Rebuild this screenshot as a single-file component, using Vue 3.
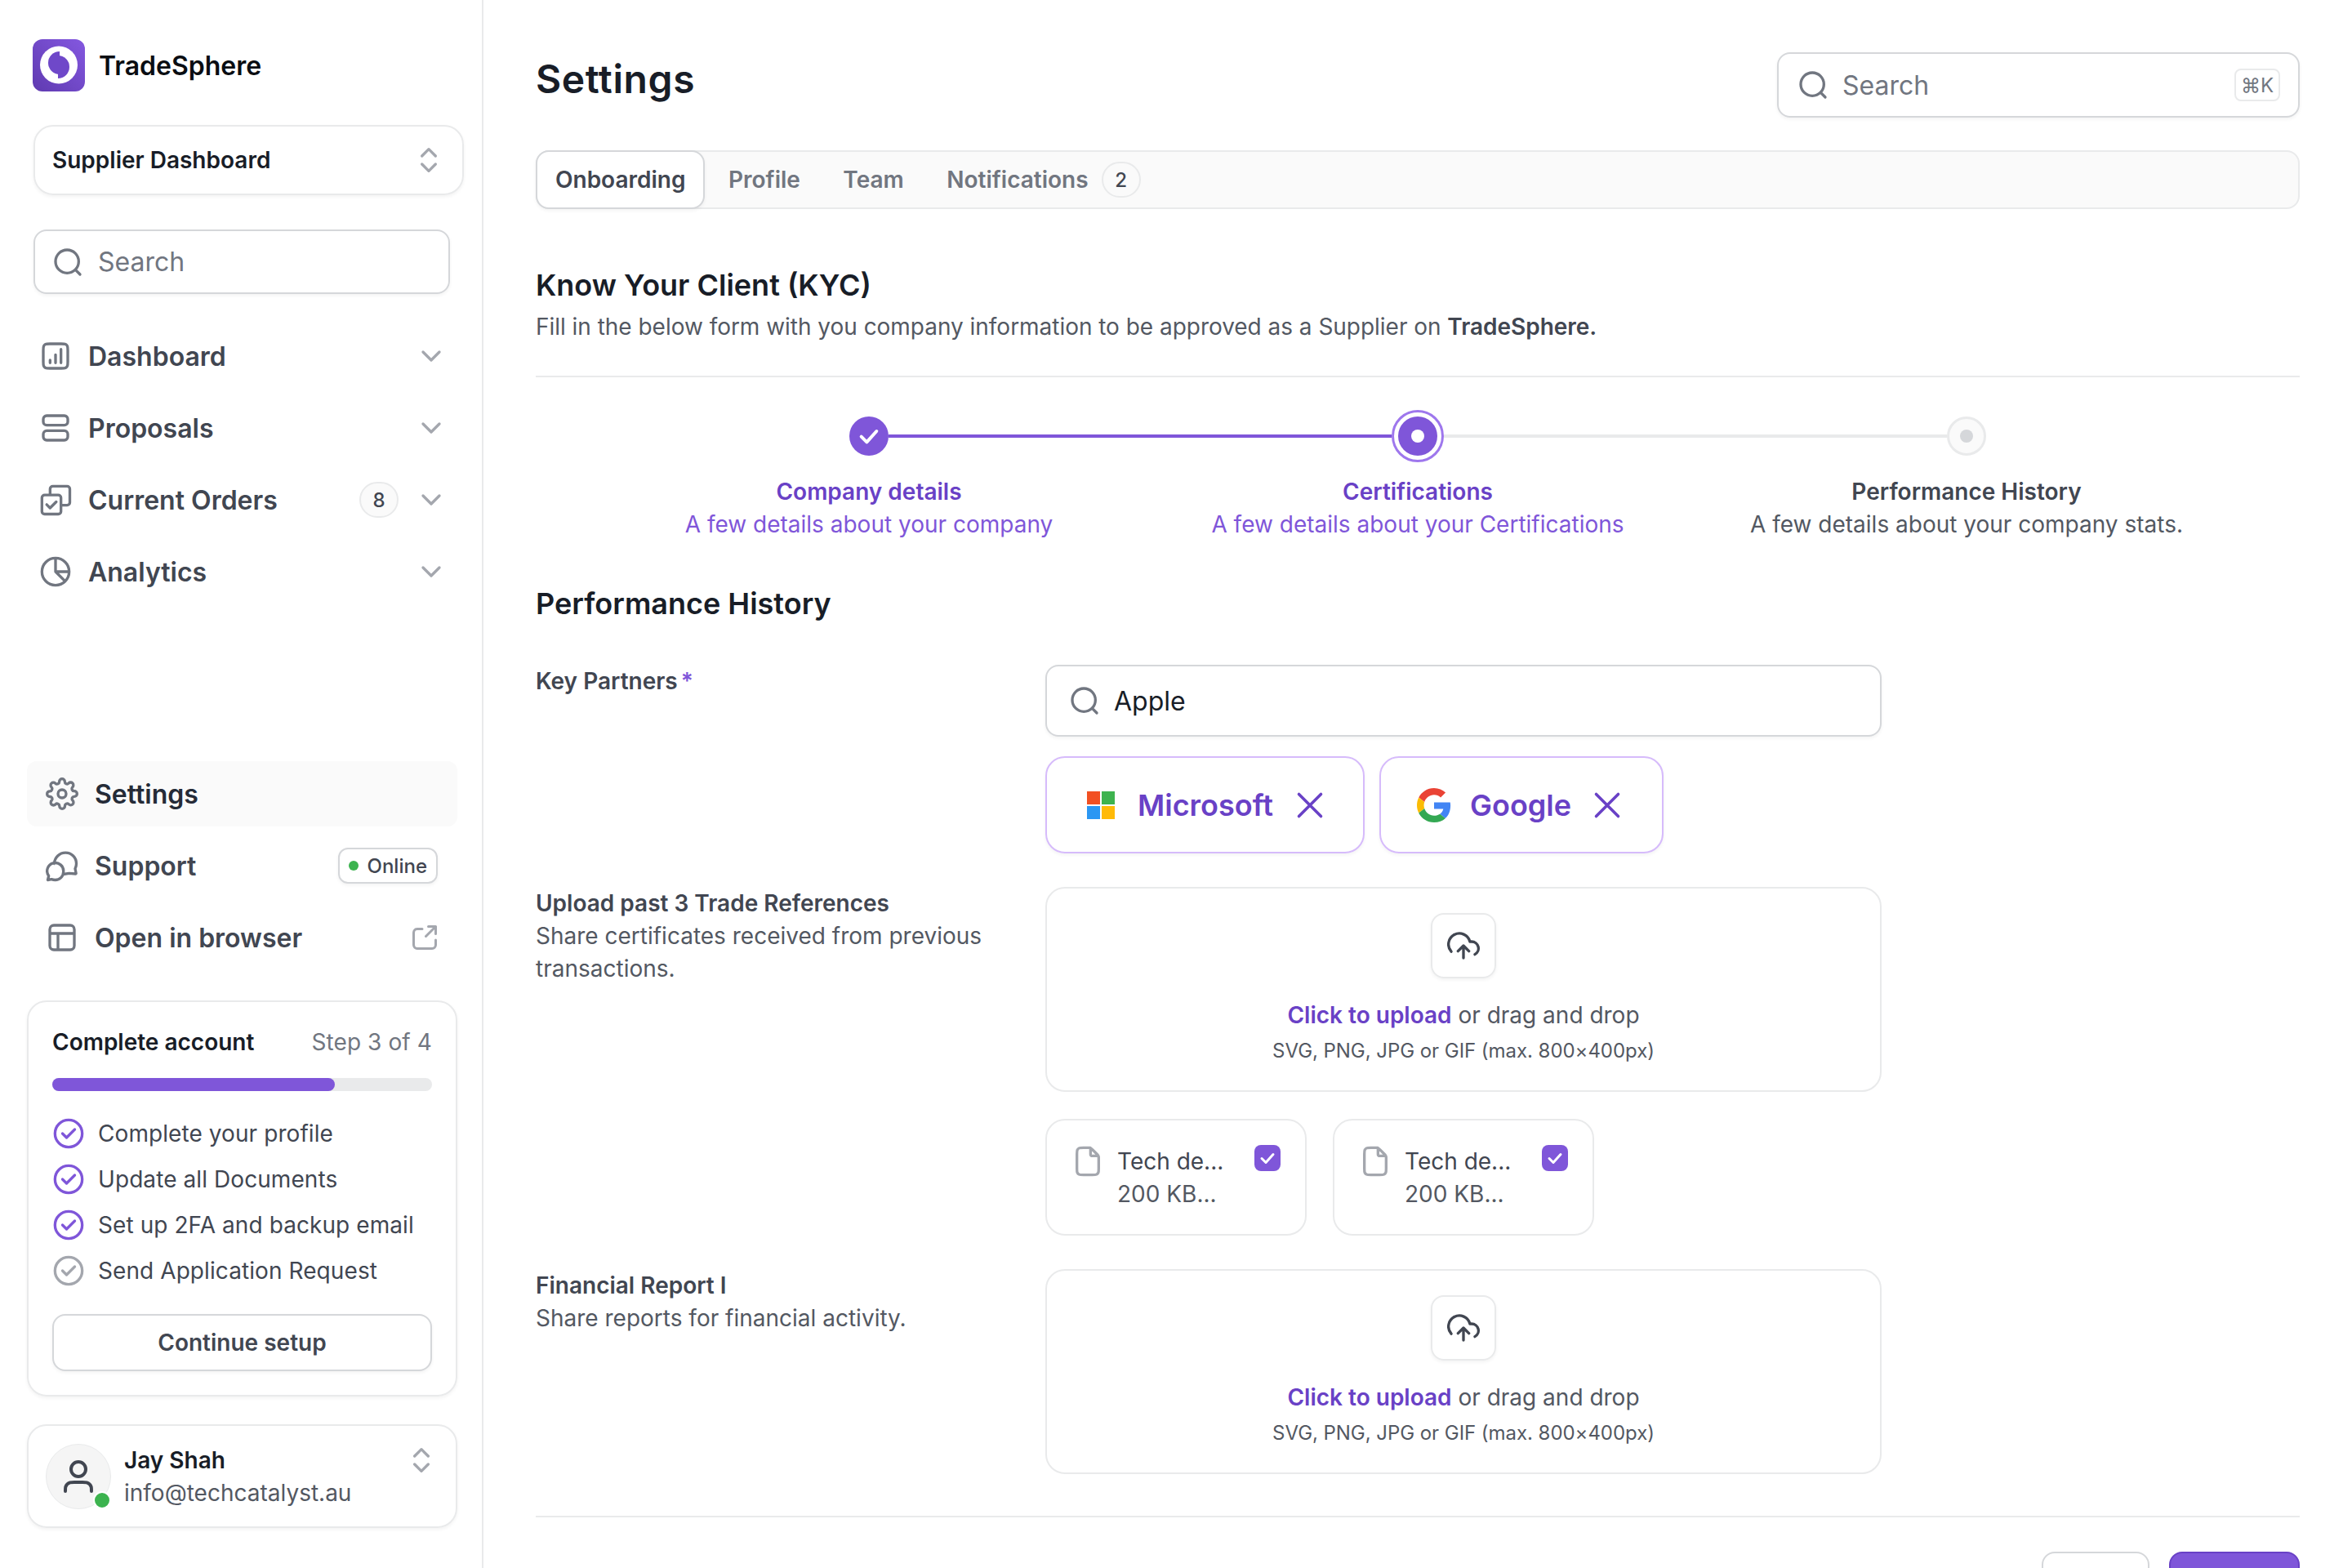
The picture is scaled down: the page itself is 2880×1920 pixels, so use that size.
<template>
  <div class="app">
    <aside class="sidebar">
      <div class="brand">
        <svg class="logo" width="64" height="64" viewBox="0 0 64 64">
          <defs>
            <linearGradient id="logoGrad" x1="1" y1="0" x2="0" y2="1">
              <stop offset="0" stop-color="#8458e0" />
              <stop offset="1" stop-color="#5f3ab0" />
            </linearGradient>
          </defs>
          <rect width="64" height="64" rx="12" fill="url(#logoGrad)" />
          <circle cx="32" cy="31.500" r="23" fill="#fff" />
          <path d="M33 15 A14 14 0 0 0 33 43 Z" fill="#6f48c9" />
          <path d="M31 48 A14 14 0 0 0 31 20 Z" fill="#6f48c9" />
        </svg>
        <span class="brand-name">TradeSphere</span>
      </div>

      <div class="selector">
        <span>Supplier Dashboard</span>
        <svg class="icon gray-light" width="40" height="40" viewBox="0 0 24 24"><path d="M7 15l5 5 5-5M7 9l5-5 5 5" /></svg>
      </div>

      <div class="search side-search">
        <svg class="icon gray" width="40" height="40" viewBox="0 0 24 24"><path :d="icons.search" /></svg>
        <span>Search</span>
      </div>

      <nav class="nav">
        <div v-for="item in navItems" :key="item.label" class="nav-item">
          <svg class="icon gray" width="40" height="40" viewBox="0 0 24 24"><path :d="item.icon" /></svg>
          <span class="nav-label">{{ item.label }}</span>
          <span v-if="item.badge" class="count">{{ item.badge }}</span>
          <svg class="icon gray-light" width="40" height="40" viewBox="0 0 24 24"><path d="M6 9l6 6 6-6" /></svg>
        </div>
      </nav>

      <div class="side-bottom">
        <div class="links">
          <div class="link active">
            <svg class="icon gray" width="40" height="40" viewBox="0 0 24 24"><circle cx="12" cy="12" r="3" /><path :d="icons.gear" /></svg>
            <span class="link-label">Settings</span>
          </div>
          <div class="link">
            <svg class="icon gray" width="40" height="40" viewBox="0 0 24 24"><path :d="icons.support" /></svg>
            <span class="link-label">Support</span>
            <span class="online"><i></i>Online</span>
          </div>
          <div class="link">
            <svg class="icon gray" width="40" height="40" viewBox="0 0 24 24"><path :d="icons.layout" /></svg>
            <span class="link-label">Open in browser</span>
            <svg class="icon gray-light ext" width="36" height="36" viewBox="0 0 24 24"><path :d="icons.external" /></svg>
          </div>
        </div>

        <div class="progress-card">
          <div class="progress-head">
            <strong>Complete account</strong>
            <span>Step 3 of 4</span>
          </div>
          <div class="bar"><div class="bar-fill" :style="{ width: progress + '%' }"></div></div>
          <ul class="checklist">
            <li v-for="task in tasks" :key="task.label">
              <svg class="icon" :class="task.done ? 'purple' : 'gray-light'" width="40" height="40" viewBox="0 0 24 24">
                <circle cx="12" cy="12" r="10" /><path d="M7.500 12l3 3 6-6" />
              </svg>
              <span>{{ task.label }}</span>
            </li>
          </ul>
          <button class="btn-continue">Continue setup</button>
        </div>

        <div class="user-card">
          <div class="avatar">
            <svg class="icon gray-dark" width="48" height="48" viewBox="0 0 24 24"><path :d="icons.user" /></svg>
            <i class="avatar-dot"></i>
          </div>
          <div class="user-text">
            <strong>Jay Shah</strong>
            <span>info@techcatalyst.au</span>
          </div>
          <svg class="icon gray-light user-chev" width="40" height="40" viewBox="0 0 24 24"><path d="M7 15l5 5 5-5M7 9l5-5 5 5" /></svg>
        </div>
      </div>
    </aside>

    <main class="main">
      <header class="page-head">
        <h1>Settings</h1>
        <div class="search top-search">
          <svg class="icon gray" width="40" height="40" viewBox="0 0 24 24"><path :d="icons.search" /></svg>
          <span>Search</span>
          <kbd>⌘K</kbd>
        </div>
      </header>

      <div class="tabs">
        <div v-for="tab in tabs" :key="tab.label" class="tab" :class="{ active: tab.active }">
          {{ tab.label }}
          <span v-if="tab.badge" class="count tab-count">{{ tab.badge }}</span>
        </div>
      </div>

      <section class="intro">
        <h2>Know Your Client (KYC)</h2>
        <p>Fill in the below form with you company information to be approved as a Supplier on <b>TradeSphere.</b></p>
      </section>

      <div class="stepper">
        <div class="track">
          <div class="dot done">
            <svg width="32" height="32" viewBox="0 0 24 24" class="icon white"><path d="M5 12.500l5 5 9-10" /></svg>
          </div>
          <div class="line on"></div>
          <div class="dot current"><div class="core"><i></i></div></div>
          <div class="line"></div>
          <div class="dot todo"><i></i></div>
        </div>
        <div class="step-labels">
          <div v-for="step in steps" :key="step.title" class="step-label" :class="{ on: step.on }">
            <strong>{{ step.title }}</strong>
            <span>{{ step.text }}</span>
          </div>
        </div>
      </div>

      <h2 class="section-title">Performance History</h2>

      <div class="form">
        <div class="row">
          <div class="field-label"><strong>Key Partners<em>*</em></strong></div>
          <div class="field">
            <div class="search partner-search">
              <svg class="icon gray" width="40" height="40" viewBox="0 0 24 24"><path :d="icons.search" /></svg>
              <span>Apple</span>
            </div>
            <div class="partners">
              <div class="partner ms">
                <svg width="34" height="34" viewBox="0 0 34 34">
                  <rect width="16" height="16" fill="#f25022" />
                  <rect x="18" width="16" height="16" fill="#3eb34f" />
                  <rect y="18" width="16" height="16" fill="#2b97f3" />
                  <rect x="18" y="18" width="16" height="16" fill="#ffba08" />
                </svg>
                <span>Microsoft</span>
                <svg class="icon close" width="54" height="54" viewBox="0 0 24 24"><path d="M18 6L6 18M6 6l12 12" /></svg>
              </div>
              <div class="partner gg">
                <svg width="42" height="42" viewBox="0 0 48 48">
                  <path fill="#EA4335" d="M24 9.500c3.540 0 6.710 1.220 9.210 3.600l6.850-6.850C35.900 2.380 30.470 0 24 0 14.620 0 6.510 5.380 2.560 13.220l7.980 6.190C12.430 13.720 17.740 9.500 24 9.500z" />
                  <path fill="#4285F4" d="M46.980 24.550c0-1.570-.15-3.090-.38-4.550H24v9.020h12.940c-.58 2.960-2.260 5.480-4.780 7.180l7.730 6c4.510-4.180 7.090-10.360 7.090-17.650z" />
                  <path fill="#FBBC05" d="M10.530 28.590c-.48-1.450-.76-2.990-.76-4.590s.27-3.140.76-4.590l-7.980-6.190C.92 16.460 0 20.120 0 24c0 3.880.92 7.540 2.560 10.780l7.970-6.190z" />
                  <path fill="#34A853" d="M24 48c6.480 0 11.930-2.130 15.890-5.810l-7.730-6c-2.150 1.450-4.920 2.300-8.160 2.300-6.260 0-11.570-4.220-13.470-9.910l-7.980 6.190C6.510 42.620 14.620 48 24 48z" />
                </svg>
                <span>Google</span>
                <svg class="icon close" width="54" height="54" viewBox="0 0 24 24"><path d="M18 6L6 18M6 6l12 12" /></svg>
              </div>
            </div>
          </div>
        </div>

        <div class="row">
          <div class="field-label">
            <strong>Upload past 3 Trade References</strong>
            <p>Share certificates received from previous transactions.</p>
          </div>
          <div class="field">
            <div class="upload">
              <div class="upload-icon">
                <svg class="icon gray-dark" width="40" height="40" viewBox="0 0 24 24"><path :d="icons.cloud" /></svg>
              </div>
              <div class="upload-text"><b>Click to upload</b> or drag and drop</div>
              <div class="upload-hint">SVG, PNG, JPG or GIF (max. 800×400px)</div>
            </div>
            <div class="files">
              <div v-for="n in 2" :key="n" class="file">
                <svg class="icon gray-light" width="40" height="40" viewBox="0 0 24 24"><path :d="icons.file" /></svg>
                <div class="file-text">
                  <span>Tech de...</span>
                  <span class="file-size">200 KB...</span>
                </div>
                <div class="checkbox">
                  <svg class="icon white" width="24" height="24" viewBox="0 0 24 24"><path d="M5 12.500l5 5 9-10" /></svg>
                </div>
              </div>
            </div>
          </div>
        </div>

        <div class="row">
          <div class="field-label">
            <strong>Financial Report I</strong>
            <p>Share reports for financial activity.</p>
          </div>
          <div class="field">
            <div class="upload">
              <div class="upload-icon">
                <svg class="icon gray-dark" width="40" height="40" viewBox="0 0 24 24"><path :d="icons.cloud" /></svg>
              </div>
              <div class="upload-text"><b>Click to upload</b> or drag and drop</div>
              <div class="upload-hint">SVG, PNG, JPG or GIF (max. 800×400px)</div>
            </div>
          </div>
        </div>
      </div>

      <div class="actions">
        <button class="btn-cancel"></button>
        <button class="btn-save"></button>
      </div>
    </main>
  </div>
</template>

<script setup>
const icons = {
  search: 'M21 21l-3.500-3.500m2.500-6a8.500 8.500 0 1 1-17 0 8.500 8.500 0 0 1 17 0z',
  gear: 'M19.400 15a1.650 1.650 0 0 0 .33 1.820l.06.06a2 2 0 0 1 0 2.830 2 2 0 0 1-2.830 0l-.06-.06a1.650 1.650 0 0 0-1.820-.33 1.650 1.650 0 0 0-1 1.510V21a2 2 0 0 1-2 2 2 2 0 0 1-2-2v-.09A1.650 1.650 0 0 0 9 19.400a1.650 1.650 0 0 0-1.820.33l-.06.06a2 2 0 0 1-2.830 0 2 2 0 0 1 0-2.830l.06-.06a1.650 1.650 0 0 0 .33-1.820 1.650 1.650 0 0 0-1.510-1H3a2 2 0 0 1-2-2 2 2 0 0 1 2-2h.09A1.650 1.650 0 0 0 4.600 9a1.650 1.650 0 0 0-.33-1.820l-.06-.06a2 2 0 0 1 0-2.830 2 2 0 0 1 2.830 0l.06.06a1.650 1.650 0 0 0 1.820.33H9a1.650 1.650 0 0 0 1-1.510V3a2 2 0 0 1 2-2 2 2 0 0 1 2 2v.09a1.650 1.650 0 0 0 1 1.510 1.650 1.650 0 0 0 1.820-.33l.06-.06a2 2 0 0 1 2.830 0 2 2 0 0 1 0 2.830l-.06.06a1.650 1.650 0 0 0-.33 1.820V9a1.650 1.650 0 0 0 1.510 1H21a2 2 0 0 1 2 2 2 2 0 0 1-2 2h-.09a1.650 1.650 0 0 0-1.510 1z',
  support: 'M6.200 10.500C6.600 6 10 2.500 14.500 2.500s8 3.500 8 8c0 1.500-.4 2.700-.9 3.700l.7 3.500-.3.3-4.800-.4-4.300.7M13 16.500a6 6 0 0 1-6 6c-1 0-2-.2-2.800-.5l-2.700.5.7-3A6 6 0 1 1 13 16.500z',
  layout: 'M3 9h18M9 9v12M6 3h12a3 3 0 0 1 3 3v12a3 3 0 0 1-3 3H6a3 3 0 0 1-3-3V6a3 3 0 0 1 3-3z',
  external: 'M21 9V3h-6M21 3l-8 8M10 5H6a3 3 0 0 0-3 3v10a3 3 0 0 0 3 3h12a3 3 0 0 0 3-3v-4',
  user: 'M20 21c0-1.396 0-2.093-.172-2.661a4 4 0 0 0-2.667-2.667c-.568-.172-1.265-.172-2.661-.172h-5c-1.396 0-2.093 0-2.661.172a4 4 0 0 0-2.667 2.667C4 18.907 4 19.604 4 21M16.500 7.500a4.500 4.500 0 1 1-9 0 4.500 4.500 0 0 1 9 0z',
  cloud: 'M8 16l4-4 4 4M12 12v9M20.390 18.390A5 5 0 0 0 18 9h-1.260A8 8 0 1 0 3 16.300',
  file: 'M14 2.300V6.400c0 .56 0 .84.109 1.054a1 1 0 0 0 .437.437C14.760 8 15.040 8 15.600 8h4.130M20 9.990V17.200c0 1.680 0 2.520-.327 3.162a3 3 0 0 1-1.311 1.311C17.720 22 16.880 22 15.200 22H8.800c-1.680 0-2.520 0-3.162-.327a3 3 0 0 1-1.311-1.311C4 19.720 4 18.880 4 17.200V6.800c0-1.680 0-2.520.327-3.162a3 3 0 0 1 1.311-1.311C6.280 2 7.120 2 8.800 2h3.210c.733 0 1.100 0 1.446.083.306.073.598.195.867.36.303.185.562.444 1.080.963l3.190 3.188c.52.52.78.78.964 1.081.165.27.287.562.36.867.083.346.083.713.083 1.447z'
};

const navItems = [
  { label: 'Dashboard', icon: 'M8 15v2m4-6v6m4-10v10M7.800 21h8.400c1.680 0 2.520 0 3.162-.327a3 3 0 0 0 1.311-1.311C21 18.720 21 17.880 21 16.200V7.800c0-1.680 0-2.520-.327-3.162a3 3 0 0 0-1.311-1.311C18.720 3 17.880 3 16.200 3H7.800c-1.680 0-2.520 0-3.162.327a3 3 0 0 0-1.311 1.311C3 5.280 3 6.120 3 7.800v8.400c0 1.680 0 2.520.327 3.162a3 3 0 0 0 1.311 1.311C5.280 21 6.120 21 7.800 21z' },
  { label: 'Proposals', icon: 'M5.500 3h13A2.500 2.500 0 0 1 21 5.500v2a2.500 2.500 0 0 1-2.500 2.500h-13A2.500 2.500 0 0 1 3 7.500v-2A2.500 2.500 0 0 1 5.500 3zM5.500 14h13a2.500 2.500 0 0 1 2.500 2.500v2a2.500 2.500 0 0 1-2.500 2.500h-13A2.500 2.500 0 0 1 3 18.500v-2A2.500 2.500 0 0 1 5.500 14z' },
  { label: 'Current Orders', icon: 'M8 8V4a2 2 0 0 1 2-2h10.500a2 2 0 0 1 2 2v10a2 2 0 0 1-2 2H16M4 8.500h10a2 2 0 0 1 2 2v10a2 2 0 0 1-2 2H4a2 2 0 0 1-2-2v-10a2 2 0 0 1 2-2zM5.500 15.500l2.500 2.500 4.500-4.500', badge: 8 },
  { label: 'Analytics', icon: 'M12 2a10 10 0 1 0 0 20 10 10 0 0 0 0-20zM12 2v10h10M12 12l7 7' }
];

const tasks = [
  { label: 'Complete your profile', done: true },
  { label: 'Update all Documents', done: true },
  { label: 'Set up 2FA and backup email', done: true },
  { label: 'Send Application Request', done: false }
];

const progress = 74.5;

const tabs = [
  { label: 'Onboarding', active: true },
  { label: 'Profile' },
  { label: 'Team' },
  { label: 'Notifications', badge: 2 }
];

const steps = [
  { title: 'Company details', text: 'A few details about your company', on: true },
  { title: 'Certifications', text: 'A few details about your Certifications', on: true },
  { title: 'Performance History', text: 'A few details about your company stats.', on: false }
];
</script>

<style>
html, body {
  margin: 0;
  background: #fff;
}
</style>

<style scoped>
* {
  box-sizing: border-box;
}

.app {
  display: flex;
  width: 2880px;
  height: 1920px;
  overflow: hidden;
  background: #fff;
  font-family: Inter, "Liberation Sans", sans-serif;
  color: #414651;
}

.icon {
  flex: none;
  fill: none;
  stroke: #717680;
  stroke-width: 2;
  stroke-linecap: round;
  stroke-linejoin: round;
}
.icon.gray-light { stroke: #a4a7ae; }
.icon.gray-dark { stroke: #414651; }
.icon.purple { stroke: #7f56d9; }
.icon.white { stroke: #fff; stroke-width: 3; }
.icon.close { stroke: #6941c6; stroke-width: 1.6; }

/* sidebar */
.sidebar {
  flex: none;
  display: flex;
  flex-direction: column;
  width: 592px;
  height: 100%;
  padding-top: 48px;
  padding-bottom: 49px;
  border-right: 2px solid #e9eaeb;
}

.brand {
  display: flex;
  align-items: center;
  gap: 17px;
  margin-left: 40px;
  height: 64px;
}
.brand-name {
  font-size: 32px;
  font-weight: 600;
  color: #0a0d12;
}

.selector {
  display: flex;
  align-items: center;
  justify-content: space-between;
  width: 527px;
  height: 86px;
  margin: 41px 0 0 41px;
  padding: 0 21px;
  border: 2px solid #e9eaeb;
  border-radius: 24px;
  box-shadow: 0 2px 4px rgba(10, 13, 18, 0.05);
  font-size: 28px;
  font-weight: 600;
  color: #181d27;
}

.search {
  display: flex;
  align-items: center;
  height: 80px;
  border: 2px solid #d5d7da;
  border-radius: 16px;
  box-shadow: 0 2px 4px rgba(10, 13, 18, 0.05);
  font-size: 32px;
  color: #717680;
}
.side-search {
  width: 510px;
  height: 79px;
  margin: 42px 0 0 41px;
  padding: 0 20px;
  gap: 17px;
}

.nav {
  display: flex;
  flex-direction: column;
  margin: 32px 0 0 48px;
  width: 500px;
}
.nav-item {
  display: flex;
  align-items: center;
  height: 88px;
  gap: 20px;
}
.nav-label {
  flex: 1;
  font-size: 32px;
  font-weight: 600;
}
.count {
  display: flex;
  align-items: center;
  justify-content: center;
  width: 48px;
  height: 44px;
  border: 2px solid #e9eaeb;
  border-radius: 22px;
  background: #fafafa;
  font-size: 24px;
  font-weight: 500;
}

.side-bottom {
  margin-top: auto;
  margin-left: 33px;
  width: 527px;
}
.links {
  display: flex;
  flex-direction: column;
  gap: 8px;
}
.link {
  display: flex;
  align-items: center;
  height: 80px;
  padding: 0 24px 0 23px;
  gap: 20px;
  border-radius: 12px;
}
.link.active {
  background: #fafafa;
}
.link.active .link-label {
  color: #252b37;
}
.link-label {
  flex: 1;
  font-size: 32px;
  font-weight: 600;
}
.online {
  display: flex;
  align-items: center;
  gap: 11px;
  height: 44px;
  padding: 0 11px;
  border: 2px solid #d5d7da;
  border-radius: 12px;
  box-shadow: 0 2px 4px rgba(10, 13, 18, 0.05);
  font-size: 24px;
  font-weight: 500;
}
.online i {
  width: 12px;
  height: 12px;
  border-radius: 50%;
  background: #3cb34f;
}
.ext {
  margin-right: -2px;
}

.progress-card {
  margin-top: 37px;
  padding: 29px;
  border: 2px solid #e9eaeb;
  border-radius: 24px;
  box-shadow: 0 2px 4px rgba(10, 13, 18, 0.05);
}
.progress-head {
  display: flex;
  justify-content: space-between;
  align-items: center;
  height: 40px;
  font-size: 28px;
}
.progress-head strong {
  font-weight: 600;
  color: #181d27;
}
.progress-head span {
  letter-spacing: 0.1px;
  color: #717680;
}
.bar {
  height: 16px;
  margin-top: 24px;
  border-radius: 8px;
  background: #e9eaeb;
}
.bar-fill {
  height: 100%;
  border-radius: 8px;
  background: #7f56d9;
}
.checklist {
  list-style: none;
  margin: 24px 0 0;
  padding: 0;
}
.checklist li {
  display: flex;
  align-items: center;
  height: 56px;
  gap: 16px;
  font-size: 28px;
  letter-spacing: 0.08px;
}
.btn-continue {
  display: block;
  width: 100%;
  height: 70px;
  margin-top: 25px;
  border: 2px solid #d5d7da;
  border-radius: 16px;
  background: #fff;
  box-shadow: 0 2px 4px rgba(10, 13, 18, 0.05);
  font-family: inherit;
  font-size: 28px;
  font-weight: 600;
  color: #414651;
}

.user-card {
  display: flex;
  align-items: center;
  height: 127px;
  margin-top: 34px;
  padding: 0 22px 0 21px;
  border: 2px solid #e9eaeb;
  border-radius: 24px;
  box-shadow: 0 2px 4px rgba(10, 13, 18, 0.05);
}
.avatar {
  position: relative;
  display: flex;
  align-items: center;
  justify-content: center;
  flex: none;
  width: 80px;
  height: 80px;
  border-radius: 50%;
  background: #f5f5f5;
  border: 1px solid #e9eaeb;
}
.avatar-dot {
  position: absolute;
  right: -1px;
  bottom: -1px;
  width: 22px;
  height: 22px;
  border-radius: 50%;
  background: #3cb34f;
  border: 2px solid #fff;
}
.user-text {
  display: flex;
  flex-direction: column;
  flex: 1;
  margin-left: 16px;
  font-size: 28px;
  line-height: 40px;
  color: #535862;
}
.user-text strong {
  font-weight: 600;
  color: #181d27;
}
.user-chev {
  align-self: flex-start;
  margin-top: 22px;
}

/* main */
.main {
  flex: 1;
  min-width: 0;
  padding: 64px 64px 0;
}
.page-head {
  display: flex;
  justify-content: space-between;
  align-items: flex-start;
  height: 80px;
}
h1 {
  margin: 0;
  font-size: 48px;
  line-height: 66px;
  font-weight: 600;
  letter-spacing: 0.6px;
  color: #181d27;
}
.top-search {
  width: 640px;
  padding: 0 22px;
  gap: 16px;
}
.top-search span {
  flex: 1;
}
kbd {
  display: flex;
  align-items: center;
  justify-content: center;
  width: 56px;
  height: 40px;
  border: 2px solid #e9eaeb;
  border-radius: 8px;
  font-family: inherit;
  font-size: 24px;
  color: #717680;
}

.tabs {
  display: flex;
  align-items: center;
  gap: 4.500px;
  height: 72px;
  margin-top: 40px;
  border: 2px solid #e9eaeb;
  border-radius: 16px;
  background: #fafafa;
}
.tab {
  display: flex;
  align-items: center;
  gap: 16px;
  height: 72px;
  padding: 0 24px;
  font-size: 28px;
  font-weight: 600;
  color: #717680;
}
.tab.active {
  margin: -2px 0 -2px -2px;
  height: 72px;
  background: #fff;
  color: #414651;
  border: 2px solid #d5d7da;
  border-radius: 16px;
  padding: 0 22px;
  box-shadow: 0 2px 4px rgba(10, 13, 18, 0.05);
}
.tab-count {
  color: #414651;
}

.intro {
  margin-top: 71px;
  padding-bottom: 40px;
  border-bottom: 2px solid #e9eaeb;
}
.intro h2,
.section-title {
  margin: 0;
  font-size: 36px;
  line-height: 44px;
  font-weight: 600;
  color: #181d27;
}
.intro p {
  margin: 9px 0 0;
  font-size: 28px;
  line-height: 40px;
  letter-spacing: -0.03px;
  color: #535862;
}
.intro b {
  font-weight: 600;
  color: #414651;
}

.stepper {
  margin: 40px 72px 0;
}
.track {
  display: flex;
  align-items: center;
  height: 64px;
  margin: 0 312px;
}
.dot {
  flex: none;
  display: flex;
  align-items: center;
  justify-content: center;
  border-radius: 50%;
}
.dot.done {
  width: 48px;
  height: 48px;
  background: #7f56d9;
}
.dot.current {
  width: 64px;
  height: 64px;
  border: 3px solid #9e77ed;
  background: #fff;
}
.core {
  display: flex;
  align-items: center;
  justify-content: center;
  width: 48px;
  height: 48px;
  border-radius: 50%;
  background: #7f56d9;
}
.core i {
  width: 16px;
  height: 16px;
  border-radius: 50%;
  background: #fff;
}
.dot.todo {
  width: 48px;
  height: 48px;
  border: 3px solid #e9eaeb;
  background: #fafafa;
}
.dot.todo i {
  width: 16px;
  height: 16px;
  border-radius: 50%;
  background: #d5d7da;
}
.line {
  flex: 1;
  height: 4px;
  background: #e9eaeb;
}
.line.on {
  background: #7f56d9;
}
.step-labels {
  display: grid;
  grid-template-columns: repeat(3, 1fr);
  margin-top: 16px;
}
.step-label {
  display: flex;
  flex-direction: column;
  align-items: center;
  font-size: 28px;
  line-height: 40px;
  color: #535862;
}
.step-label strong {
  font-weight: 600;
  color: #414651;
}
.step-label.on {
  color: #7f56d9;
}
.step-label.on strong {
  color: #6941c6;
}

.section-title {
  margin-top: 55px;
}

.form {
  display: flex;
  flex-direction: column;
  gap: 41px;
  margin-top: 53px;
}
.row {
  display: flex;
}
.field-label {
  flex: none;
  width: 624px;
  font-size: 28px;
  line-height: 40px;
  color: #535862;
}
.field-label strong {
  display: block;
  font-weight: 600;
  color: #414651;
}
.field-label em {
  margin-left: 4px;
  font-style: normal;
  color: #7f56d9;
}
.field-label p {
  margin: 0;
  width: 580px;
}
.field {
  width: 1024px;
}
.partner-search {
  height: 88px;
  padding: 0 26px;
  gap: 16px;
  color: #181d27;
}
.partners {
  display: flex;
  gap: 18px;
  margin-top: 24px;
}
.partner {
  display: flex;
  align-items: center;
  height: 119px;
  border: 2px solid #d6bbfb;
  border-radius: 24px;
  box-shadow: 0 2px 4px rgba(10, 13, 18, 0.05);
  font-size: 36px;
  font-weight: 600;
  color: #6941c6;
}
.partner.ms {
  width: 391px;
  padding-left: 49px;
  gap: 28px;
}
.partner.ms .close {
  margin-left: -10px;
}
.partner.gg {
  width: 348px;
  padding-left: 44px;
  gap: 23px;
}
.partner.gg .close {
  margin-left: -6px;
}

.upload {
  display: flex;
  flex-direction: column;
  align-items: center;
  height: 251px;
  padding-top: 30px;
  border: 2px solid #e9eaeb;
  border-radius: 24px;
}
.upload-icon {
  display: flex;
  align-items: center;
  justify-content: center;
  width: 80px;
  height: 80px;
  border: 2px solid #e9eaeb;
  border-radius: 16px;
  box-shadow: 0 2px 4px rgba(10, 13, 18, 0.05);
}
.upload-text {
  margin-top: 25px;
  font-size: 28px;
  line-height: 40px;
  color: #535862;
}
.upload-text b {
  font-weight: 600;
  color: #6941c6;
}
.upload-hint {
  margin-top: 6px;
  font-size: 24px;
  line-height: 36px;
  letter-spacing: -0.05px;
  color: #535862;
}

.files {
  display: flex;
  gap: 32px;
  margin-top: 33px;
}
.file {
  display: flex;
  align-items: flex-start;
  width: 320px;
  height: 143px;
  padding: 30px 30px 0 30px;
  border: 2px solid #e9eaeb;
  border-radius: 24px;
}
.file-text {
  display: flex;
  flex-direction: column;
  flex: 1;
  margin-left: 16px;
  font-size: 28px;
  line-height: 40px;
}
.file-size {
  color: #535862;
}
.checkbox {
  flex: none;
  display: flex;
  align-items: center;
  justify-content: center;
  width: 32px;
  height: 32px;
  border-radius: 8px;
  background: #7f56d9;
}

.actions {
  display: flex;
  justify-content: flex-end;
  gap: 24px;
  margin-top: 51px;
  padding-top: 42px;
  border-top: 2px solid #e9eaeb;
}
.btn-cancel,
.btn-save {
  height: 80px;
  border-radius: 16px;
}
.btn-cancel {
  width: 132px;
  border: 2px solid #d5d7da;
  background: #fff;
}
.btn-save {
  width: 160px;
  border: 2px solid #6941c6;
  background: #7f56d9;
}
</style>
